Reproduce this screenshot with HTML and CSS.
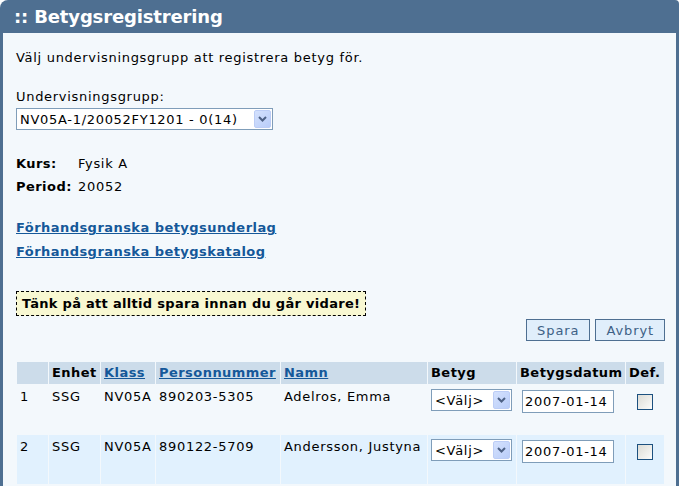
FILE: index.html
```html
<!DOCTYPE html>
<html lang="sv">
<head>
    <meta charset="UTF-8">
    <title>Betygsregistrering</title>
    <link rel="stylesheet" href="styles.css">
</head>
<body>
    <div class="panel">
        <div class="panel-head">:: Betygsregistrering</div>
        <div class="panel-body">
            <p class="intro">Välj undervisningsgrupp att registrera betyg för.</p>

            <label class="field-label" for="grupp">Undervisningsgrupp:</label>
            <span class="combo combo-group">
                <select id="grupp">
                    <option>NV05A-1/20052FY1201 - 0(14)</option>
                </select>
                <span class="combo-btn"><svg width="9" height="6" viewBox="0 0 9 6"><path d="M1 1 L4.5 4.5 L8 1" fill="none" stroke="#4d6185" stroke-width="2"/></svg></span>
            </span>

            <table class="info">
                <tr><th>Kurs:</th><td>Fysik A</td></tr>
                <tr><th>Period:</th><td>20052</td></tr>
            </table>

            <div class="links">
                <a href="#">Förhandsgranska betygsunderlag</a>
                <a href="#">Förhandsgranska betygskatalog</a>
            </div>

            <div class="notice">Tänk på att alltid spara innan du går vidare!</div>

            <div class="actions">
                <button type="button">Spara</button>
                <button type="button">Avbryt</button>
            </div>

            <table class="grades">
                <colgroup>
                    <col style="width: 31px">
                    <col style="width: 51px">
                    <col style="width: 54px">
                    <col style="width: 124px">
                    <col style="width: 146px">
                    <col style="width: 88px">
                    <col style="width: 108px">
                    <col style="width: 38px">
                </colgroup>
                <thead>
                    <tr>
                        <th></th>
                        <th>Enhet</th>
                        <th><a href="#">Klass</a></th>
                        <th><a href="#">Personnummer</a></th>
                        <th><a href="#">Namn</a></th>
                        <th>Betyg</th>
                        <th>Betygsdatum</th>
                        <th>Def.</th>
                    </tr>
                </thead>
                <tbody>
                    <tr>
                        <td>1</td>
                        <td>SSG</td>
                        <td>NV05A</td>
                        <td>890203-5305</td>
                        <td>Adelros, Emma</td>
                        <td>
                            <span class="combo combo-grade">
                                <select><option>&lt;Välj&gt;</option></select>
                                <span class="combo-btn"><svg width="9" height="6" viewBox="0 0 9 6"><path d="M1 1 L4.5 4.5 L8 1" fill="none" stroke="#4d6185" stroke-width="2"/></svg></span>
                            </span>
                        </td>
                        <td><input class="date" type="text" value="2007-01-14"></td>
                        <td><input class="check" type="checkbox"></td>
                    </tr>
                    <tr class="alt">
                        <td>2</td>
                        <td>SSG</td>
                        <td>NV05A</td>
                        <td>890122-5709</td>
                        <td>Andersson, Justyna</td>
                        <td>
                            <span class="combo combo-grade">
                                <select><option>&lt;Välj&gt;</option></select>
                                <span class="combo-btn"><svg width="9" height="6" viewBox="0 0 9 6"><path d="M1 1 L4.5 4.5 L8 1" fill="none" stroke="#4d6185" stroke-width="2"/></svg></span>
                            </span>
                        </td>
                        <td><input class="date" type="text" value="2007-01-14"></td>
                        <td><input class="check" type="checkbox"></td>
                    </tr>
                </tbody>
            </table>
        </div>
    </div>
</body>
</html>
```

FILE: styles.css
```css
body {
    margin: 0;
    padding: 0;
    background: #fff;
    font-family: "DejaVu Sans", Verdana, sans-serif;
    font-size: 13px;
    letter-spacing: 0.7px;
    color: #000;
}

b, th, a {
    letter-spacing: 0.45px;
}

.panel {
    background: #4e6f91;
    border-radius: 8px 4px 0 0;
}

.panel-head {
    height: 33px;
    line-height: 33px;
    padding-left: 14px;
    color: #fff;
    font-size: 18px;
    font-weight: bold;
    letter-spacing: -0.15px;
}

.panel-body {
    margin: 0 3px;
    background: #f3f8fc;
    padding: 17px 11px 20px 13px;
}

.intro {
    margin: 0 0 23px 0;
    line-height: 16px;
}

.field-label {
    display: block;
    line-height: 16px;
    margin-bottom: 3px;
}

/* XP style combo box */
.combo {
    position: relative;
    display: inline-block;
    box-sizing: border-box;
    height: 22px;
    border: 1px solid #7f9db9;
    background: #fff;
    vertical-align: top;
}

.combo select {
    appearance: none;
    -webkit-appearance: none;
    border: none;
    background: transparent;
    font-family: inherit;
    font-size: 13px;
    letter-spacing: 0.7px;
    height: 20px;
    width: 100%;
    padding: 0 0 0 3px;
    margin: 0;
    color: #000;
}

.combo-btn {
    position: absolute;
    top: 1px;
    right: 1px;
    bottom: 1px;
    width: 17px;
    box-sizing: border-box;
    border: 1px solid #bccdf6;
    border-radius: 2px;
    background: linear-gradient(135deg, #d4e1fd, #b9cdf9);
    display: flex;
    align-items: center;
    justify-content: center;
}

.combo-group {
    width: 257px;
}

.combo-grade {
    width: 81px;
}

.info {
    border-collapse: collapse;
    margin-top: 22px;
}

.info th,
.info td {
    padding: 0;
    line-height: 23px;
    text-align: left;
    vertical-align: middle;
}

.info th {
    width: 62px;
}

.links {
    margin-top: 18px;
}

.links a {
    display: block;
    line-height: 24px;
}

a {
    color: #155899;
    font-weight: bold;
}

.notice {
    display: inline-block;
    margin-top: 27px;
    border: 1px dashed #000;
    background: #f8f8d2;
    padding: 0 5px;
    line-height: 23px;
    font-weight: bold;
    letter-spacing: 0.3px;
}

.actions {
    display: flex;
    justify-content: flex-end;
    gap: 5px;
    margin-top: 3px;
}

.actions button {
    height: 22px;
    padding: 0 10px;
    border: 1px solid #4e6f91;
    background: #e0eefb;
    color: #3e6186;
    font-family: inherit;
    font-size: 13px;
    letter-spacing: 0.9px;
}

.grades {
    margin-top: 20px;
    table-layout: fixed;
    width: 649px;
    border-spacing: 1px;
}

.grades th,
.grades td {
    padding: 4px 3px;
    text-align: left;
    vertical-align: top;
    line-height: 16px;
    white-space: nowrap;
    overflow: hidden;
}

.grades th {
    background: #ccdcea;
    padding: 3px 3px;
    height: 16px;
}

.grades td {
    height: 41px;
}

.grades tr.alt td {
    background: #e1f1fe;
}

.date {
    box-sizing: border-box;
    width: 92px;
    height: 23px;
    margin: 1px 0 0 2px;
    padding: 0 2px;
    border: 1px solid #7f9db9;
    font-family: inherit;
    font-size: 13px;
    letter-spacing: 0.7px;
}

.check {
    appearance: none;
    -webkit-appearance: none;
    display: block;
    width: 16px;
    height: 16px;
    margin: 5px auto 0;
    border: 1px solid #1c5180;
    background: linear-gradient(135deg, #dcdcd6, #fcfcfb);
}
```
